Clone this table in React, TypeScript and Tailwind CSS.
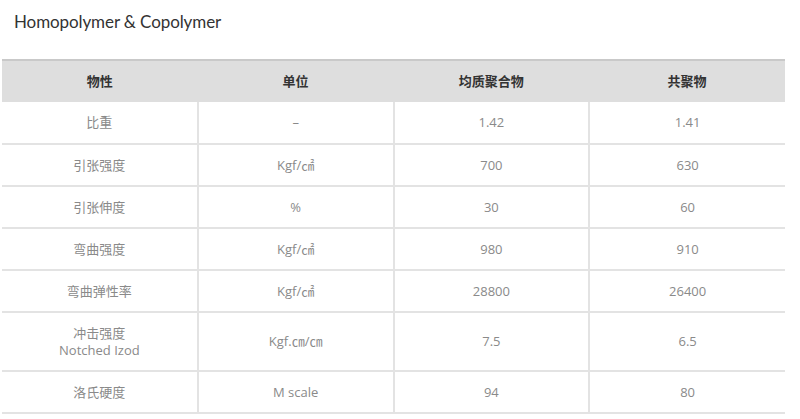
const rows: [React.ReactNode, string, string, string][] = [
  ['比重', '–', '1.42', '1.41'],
  ['引张强度', 'Kgf/㎠', '700', '630'],
  ['引张伸度', '%', '30', '60'],
  ['弯曲强度', 'Kgf/㎠', '980', '910'],
  ['弯曲弹性率', 'Kgf/㎠', '28800', '26400'],
  [
    <>
      冲击强度
      <br />
      Notched Izod
    </>,
    'Kgf.㎝/㎝',
    '7.5',
    '6.5',
  ],
  ['洛氏硬度', 'M scale', '94', '80'],
]

const headers = ['物性', '单位', '均质聚合物', '共聚物']

export default function App() {
  return (
    <div className="w-[800px] h-[419px] bg-white overflow-hidden font-['Open_Sans','Noto_Sans_CJK_SC',sans-serif]">
      <h1 className="pl-[14px] pt-[9px] font-['Lato','Noto_Sans_CJK_SC',sans-serif] text-[17px] leading-[26px] text-[#333] tracking-[-0.1px]">
        Homopolymer &amp; Copolymer
      </h1>
      <table className="ml-[2px] mt-[24px] w-[783px] border-collapse table-fixed">
        <thead>
          <tr className="bg-[#dedede] border-t-2 border-[#c9c9c9]">
            {headers.map((h) => (
              <th key={h} className="h-[42px] text-[13px] font-bold text-[#333] text-center">
                {h}
              </th>
            ))}
          </tr>
        </thead>
        <tbody>
          {rows.map((r, i) => (
            <tr key={i} className="border-b-2 border-[#e3e3e3]">
              {r.map((c, j) => (
                <td
                  key={j}
                  className={`${i === 5 ? 'h-[59px]' : 'h-[42px]'} text-[13px] leading-[17px] text-[#8a8a8a] text-center ${j < 3 ? 'border-r-2 border-[#e3e3e3]' : ''}`}
                >
                  {c}
                </td>
              ))}
            </tr>
          ))}
        </tbody>
      </table>
    </div>
  )
}
